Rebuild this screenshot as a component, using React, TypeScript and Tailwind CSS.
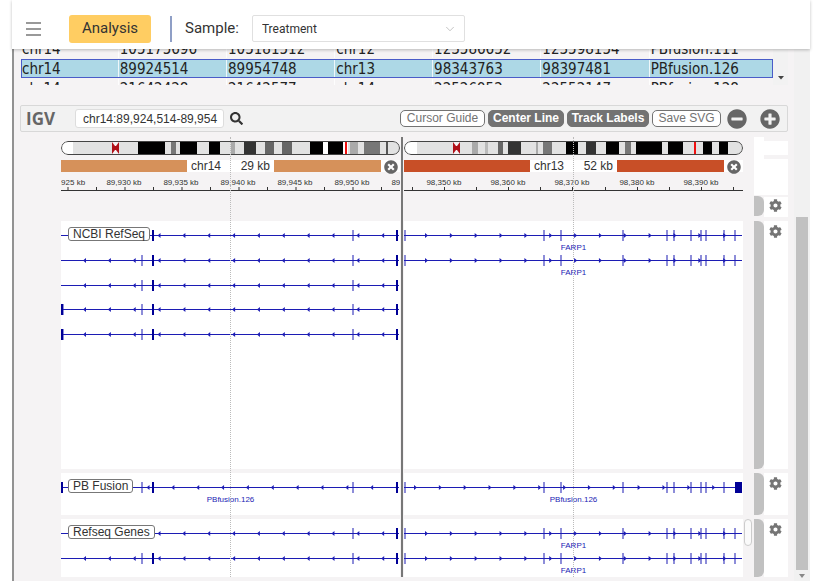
import { ChevronDown } from "lucide-react";
import { FaCog, FaMinusCircle, FaPlusCircle, FaSearch, FaTimesCircle } from "react-icons/fa";

const PANEL = 339;
const BLUE = "#1c1cb4";

// Everything inside a locus panel is placed as a share of the panel width
const pct = (x: number) => `${(x / PANEL) * 100}%`;

const rows = [
  ["chr14", "105175696", "105181512", "chr12", "123586652", "123598154", "PBfusion.111"],
  ["chr14", "89924514", "89954748", "chr13", "98343763", "98397481", "PBfusion.126"],
  ["chr14", "21642428", "21642577", "chr14", "22526952", "22552147", "PBfusion.128"],
];

type Band = [start: number, end: number, fill: string];

type Gene = {
  y: number;
  arrowStart: number;
  thin: number[];
  thick?: number[];
  blocks?: [number, number][];
  label?: string;
};

type Locus = {
  chr: string;
  size: string;
  color: string;
  bands: Band[];
  centromere: number;
  marker: number;
  ticks: number[];
  labels: [number, string][];
  dir: 1 | -1;
  tracks: Gene[][];
};

const leftThin = [81, 292];
const leftThick = [92, 336];
const rightThin = [1, 140, 157, 219, 263, 270, 287, 297, 302, 320, 331];

const loci: Locus[] = [
  {
    chr: "chr14",
    size: "29 kb",
    color: "#d6915a",
    centromere: 51,
    marker: 284,
    bands: [
      [0, 12, "#fff"],
      [77, 104, "#000"],
      [110, 115, "#777"],
      [119, 136, "#000"],
      [148, 159, "#000"],
      [170, 174, "#aaa"],
      [183, 195, "#333"],
      [204, 213, "#666"],
      [221, 231, "#666"],
      [249, 262, "#000"],
      [262, 267, "#fff"],
      [267, 282, "#000"],
      [282, 287, "#fff"],
      [289, 297, "#aaa"],
      [303, 319, "#777"],
      [325, 327, "#555"],
    ],
    ticks: [6.5, 35, 63.5, 92, 120.5, 149, 177.5, 206, 234.5, 263, 291.5, 320],
    labels: [
      [6.5, "89,925 kb"],
      [63, "89,930 kb"],
      [120, "89,935 kb"],
      [177, "89,940 kb"],
      [234, "89,945 kb"],
      [291, "89,950 kb"],
      [348, "89,955 kb"],
    ],
    dir: -1,
    tracks: [
      [
        { y: 14, arrowStart: 98.5, thin: [292], thick: leftThick },
        { y: 39, arrowStart: 24, thin: leftThin, thick: leftThick },
        { y: 64, arrowStart: 24, thin: leftThin, thick: leftThick },
        { y: 88, arrowStart: 24, thin: [2, ...leftThin], thick: [1, ...leftThick] },
        { y: 113, arrowStart: 24, thin: [2, ...leftThin], thick: [1, ...leftThick] },
      ],
      [{ y: 14, arrowStart: 87.5, thin: leftThin, thick: [1, ...leftThick], label: "PBfusion.126" }],
      [
        { y: 14, arrowStart: 98.5, thin: [292], thick: [336] },
        { y: 39, arrowStart: 24, thin: leftThin, thick: leftThick },
      ],
    ],
  },
  {
    chr: "chr13",
    size: "52 kb",
    color: "#c84f27",
    centromere: 49,
    marker: 290,
    bands: [
      [0, 13, "#fff"],
      [68, 74, "#aaa"],
      [81, 84, "#bbb"],
      [94, 99, "#666"],
      [104, 117, "#333"],
      [132, 134, "#aaa"],
      [139, 148, "#777"],
      [162, 174, "#000"],
      [182, 192, "#333"],
      [202, 215, "#000"],
      [221, 227, "#777"],
      [232, 258, "#000"],
      [264, 279, "#000"],
      [299, 308, "#000"],
      [315, 324, "#000"],
    ],
    ticks: [8, 40, 72, 104, 136, 168, 201, 233, 265, 297, 329],
    labels: [
      [40, "98,350 kb"],
      [104, "98,360 kb"],
      [168, "98,370 kb"],
      [233, "98,380 kb"],
      [297, "98,390 kb"],
    ],
    dir: 1,
    tracks: [
      [
        { y: 14, arrowStart: 22, thin: rightThin, label: "FARP1" },
        { y: 39, arrowStart: 22, thin: rightThin, label: "FARP1" },
      ],
      [{ y: 14, arrowStart: 11, thin: rightThin.slice(0, -1), blocks: [[331, 338]], label: "PBfusion.126" }],
      [
        { y: 14, arrowStart: 22, thin: rightThin, label: "FARP1" },
        { y: 39, arrowStart: 22, thin: rightThin, label: "FARP1" },
      ],
    ],
  },
];

const trackNames = ["NCBI RefSeq", "PB Fusion", "Refseq Genes"];
const trackHeights = ["h-[248px]", "h-[42px]", "h-[58px]"];

function Ideogram({ locus }: { locus: Locus }) {
  const c = locus.centromere;
  return (
    <div className="relative h-[14px] overflow-hidden rounded-full">
      <svg className="block h-full w-full">
        <rect width="100%" height="14" fill="#e2e2e2" />
        {locus.bands.map(([start, end, fill]) => (
          <rect key={start} x={pct(start)} width={pct(end - start)} height="14" fill={fill} />
        ))}
        <svg x={pct(c)} overflow="visible">
          <rect width="7" height="14" fill="#f5f3f4" />
          <path d="M0 1 L3 5 H4 L7 1 V13 L4 9 H3 L0 13 Z" fill="#b01018" />
        </svg>
        <rect x={pct(locus.marker)} width="2" height="14" fill="#f01010" />
      </svg>
      <div className="absolute inset-0 rounded-full border border-[#444]" />
    </div>
  );
}

function Ruler({ locus }: { locus: Locus }) {
  return (
    <svg className="block h-[23px] w-full overflow-hidden">
      <rect y="18" width="100%" height="1" fill="#333" />
      {locus.ticks.map((t) => (
        <rect key={t} x={pct(t)} y="15" width="1" height="3" fill="#333" />
      ))}
      {locus.labels.map(([x, text]) => (
        <text key={text} x={pct(x)} y="13" textAnchor="middle" fontSize="8" fill="#333">
          {text}
        </text>
      ))}
    </svg>
  );
}

function GeneRow({ gene, dir }: { gene: Gene; dir: 1 | -1 }) {
  const arrows: number[] = [];
  for (let x = gene.arrowStart; x < 338; x += 24.85) arrows.push(x);

  return (
    <g fill={BLUE}>
      <rect y={gene.y} width={pct(338)} height="1" />
      {arrows.map((x) => (
        <svg key={x} x={pct(x)} y={gene.y} overflow="visible">
          <path d={dir === 1 ? "M-1 -2 L2 0.5 L-1 3 Z" : "M1 -2 L-2 0.5 L1 3 Z"} />
        </svg>
      ))}
      {gene.thin.map((x) => (
        <rect key={x} x={pct(x - 0.5)} y={gene.y - 5} width="1" height="11" />
      ))}
      {gene.thick?.map((x) => (
        <rect key={x} x={pct(x - 1)} y={gene.y - 5} width="2" height="11" fill="#000096" />
      ))}
      {gene.blocks?.map(([a, b]) => (
        <rect key={a} x={pct(a)} y={gene.y - 5} width={pct(b - a)} height="11" fill="#000096" />
      ))}
      {gene.label && (
        <text x="50%" y={gene.y + 15} textAnchor="middle" fontSize="8">
          {gene.label}
        </text>
      )}
    </g>
  );
}

function LocusPanel({ locus, showNames }: { locus: Locus; showNames?: boolean }) {
  return (
    <section className="relative min-w-0 flex-1 pt-1">
      <Ideogram locus={locus} />

      <div className="mt-[5px] flex h-3 items-center bg-white">
        <div className="h-3 flex-1" style={{ backgroundColor: locus.color }} />
        <div className="flex w-[87px] justify-between px-1 text-xs leading-3 text-[#333]">
          <span>{locus.chr}</span>
          <span>{locus.size}</span>
        </div>
        <div className="h-3 w-[107px]" style={{ backgroundColor: locus.color }} />
        <button aria-label={`Close ${locus.chr}`} className="flex h-4 w-[19px] items-center justify-center pt-[2px] text-[#666]">
          <FaTimesCircle size={14} />
        </button>
      </div>

      <Ruler locus={locus} />
      <div className="h-[26px]" />

      <div className="flex flex-col gap-1">
        {locus.tracks.map((genes, i) => (
          <div key={i} className={`relative bg-white ${trackHeights[i]}`}>
            <svg className="block h-full w-full">
              {genes.map((gene) => (
                <GeneRow key={gene.y} gene={gene} dir={locus.dir} />
              ))}
            </svg>
            {showNames && (
              <span className="absolute top-[6px] left-[7px] h-[14px] rounded-[3px] border border-[#777] bg-white px-1 text-xs leading-3 text-[#333]">
                {trackNames[i]}
              </span>
            )}
          </div>
        ))}
      </div>

      {/* Center line */}
      <div className="pointer-events-none absolute inset-y-0 left-1/2 -ml-px border-l border-dotted border-[#bbb]" />
    </section>
  );
}

function TrackHandles() {
  return (
    <div className="ml-[11px] flex w-[10px] flex-col">
      <div className="h-[58px] bg-white" />
      <div className="mt-px mb-[5px] h-5 rounded-r-md bg-[#c1c1c1]" />
      <div className="flex flex-col gap-1">
        {trackHeights.map((h) => (
          <div key={h} className={`rounded-r-md bg-[#c1c1c1] ${h}`} />
        ))}
      </div>
    </div>
  );
}

function GearColumn() {
  return (
    <div className="flex w-6 flex-col gap-1 pt-1 text-[#757575]">
      <div className="h-[14px] bg-white" />
      <div className="mb-[-2px] h-9 bg-white" />
      <div className="flex h-5 items-start justify-center bg-white pt-[2px] pr-[2px]">
        <button aria-label="Sequence settings">
          <FaCog size={13} />
        </button>
      </div>
      {trackNames.map((name, i) => (
        <div key={name} className={`flex items-start justify-center bg-white pt-1 pr-[2px] ${trackHeights[i]}`}>
          <button aria-label={`${name} settings`}>
            <FaCog size={13} />
          </button>
        </div>
      ))}
    </div>
  );
}

function Header() {
  return (
    <header className="relative z-10 flex h-[49px] items-center bg-white pt-2 pl-[14px] font-[Roboto,sans-serif] text-[#333] shadow-[0_1px_3px_rgba(0,0,0,0.25)]">
      <button aria-label="Menu" className="flex w-[15px] flex-col gap-1">
        <span className="h-[2px] bg-[#999]" />
        <span className="h-[2px] bg-[#999]" />
        <span className="h-[2px] bg-[#999]" />
      </button>
      <button className="ml-7 h-7 w-[82px] rounded-[3px] bg-[#ffcd62] text-[15px]">Analysis</button>
      <div className="ml-[19px] h-[26px] w-[2px] bg-[#8f9fc6]" />
      <label htmlFor="sample" className="ml-[13px] text-[15px]">
        Sample:
      </label>
      <div className="relative ml-[13px] w-[213px]">
        <select id="sample" className="block h-[27px] w-full appearance-none rounded-[2px] border border-[#e0e0e0] bg-white pl-[9px] text-xs">
          <option>Treatment</option>
        </select>
        <ChevronDown size={14} strokeWidth={1} className="pointer-events-none absolute top-[7px] right-2 text-[#999]" />
      </div>
    </header>
  );
}

function FusionTable() {
  return (
    <div className="ml-px flex h-9 overflow-hidden">
      <div className="-mt-[11px] min-w-0 flex-1">
        <table className="w-full table-fixed border-separate border-spacing-x-0 border-spacing-y-px font-['DejaVu_Sans_Condensed','DejaVu_Sans',sans-serif] text-[15px] leading-[17px] text-[#222]">
          <colgroup>
            <col className="w-[13%]" />
            <col className="w-[14.4%]" />
            <col className="w-[14.4%]" />
            <col className="w-[13%]" />
            <col className="w-[14.4%]" />
            <col className="w-[14.4%]" />
            <col />
          </colgroup>
          <tbody>
            {rows.map((row, i) => (
              <tr key={i} className={i === 1 ? "bg-[#add8e6] outline-1 -outline-offset-1 outline-[#4a5cc8]" : ""}>
                {row.map((cell, j) => (
                  <td key={j} className="h-[19px] border-r border-white/80 p-0 pt-[2px] pl-px last:border-r-0">
                    {cell}
                  </td>
                ))}
              </tr>
            ))}
          </tbody>
        </table>
      </div>
      <div className="flex w-[15px] items-end justify-center bg-[#f2f2f2] pb-[5px]">
        <svg width="6" height="4">
          <path d="M0 0 H6 L3 3.5 Z" fill="#444" />
        </svg>
      </div>
    </div>
  );
}

const outlineButton = "h-[17px] rounded-[5px] border border-[#737373] bg-white text-[#737373]";
const solidButton = "h-[17px] rounded-[5px] border border-[#737373] bg-[#737373] font-bold text-white";

function IgvToolbar() {
  return (
    <div className="mt-5 flex h-[27px] items-center rounded-[2px] border border-[#d8d8d8] bg-[#f2f2f2] pr-[7px] pl-[5px] text-xs leading-[15px]">
      <span className="w-[49px] font-['Open_Sans',sans-serif] text-[17px] font-bold text-[#666]">IGV</span>
      <input
        aria-label="Locus"
        defaultValue="chr14:89,924,514-89,954"
        className="h-[19px] w-[149px] rounded-[3px] border border-[#ddd] bg-white pr-[2px] pl-[7px] text-[#333]"
      />
      <button aria-label="Search" className="ml-[6px] text-[#333]">
        <FaSearch size={13} />
      </button>
      <div className="ml-auto flex items-center gap-[3px]">
        <button className={`w-[85px] ${outlineButton}`}>Cursor Guide</button>
        <button className={`w-[76px] ${solidButton}`}>Center Line</button>
        <button className={`w-[82px] ${solidButton}`}>Track Labels</button>
        <button className={`w-[69px] ${outlineButton}`}>Save SVG</button>
      </div>
      <button aria-label="Zoom out" className="ml-[6px] text-[#666]">
        <FaMinusCircle size={20} />
      </button>
      <button aria-label="Zoom in" className="ml-[13px] text-[#666]">
        <FaPlusCircle size={20} />
      </button>
    </div>
  );
}

export default function App() {
  return (
    <div className="bg-white pr-[10px] pl-3 font-['Liberation_Sans',Arial,sans-serif]">
      <Header />
      <div className="flex">
        <main className="min-w-0 flex-1 border-l-2 border-[#929292] bg-[#f5f3f4] px-[6px] pb-1">
          <FusionTable />
          <IgvToolbar />
          <div className="mt-[5px] flex pl-[41px]">
            <div className="relative flex min-w-0 flex-1">
              <LocusPanel locus={loci[0]} showNames />
              <div className="flex w-1 justify-center">
                <div className="w-[2px] bg-[#777]" />
              </div>
              <LocusPanel locus={loci[1]} />
              {/* Scroller of the last track */}
              <div className="absolute -right-[9px] bottom-[31px] h-[27px] w-2 rounded-full border border-[#ccc] bg-[#fafafa]" />
            </div>
            <TrackHandles />
            <GearColumn />
          </div>
        </main>
        <div className="flex w-4 flex-col items-center bg-[#f1f1f1] pt-[168px]">
          <div className="w-3 flex-1 bg-[#c1c1c1]" />
          <div className="flex h-[11px] items-center">
            <svg width="6" height="4">
              <path d="M0 0 H6 L3 4 Z" fill="#888" />
            </svg>
          </div>
        </div>
      </div>
    </div>
  );
}
